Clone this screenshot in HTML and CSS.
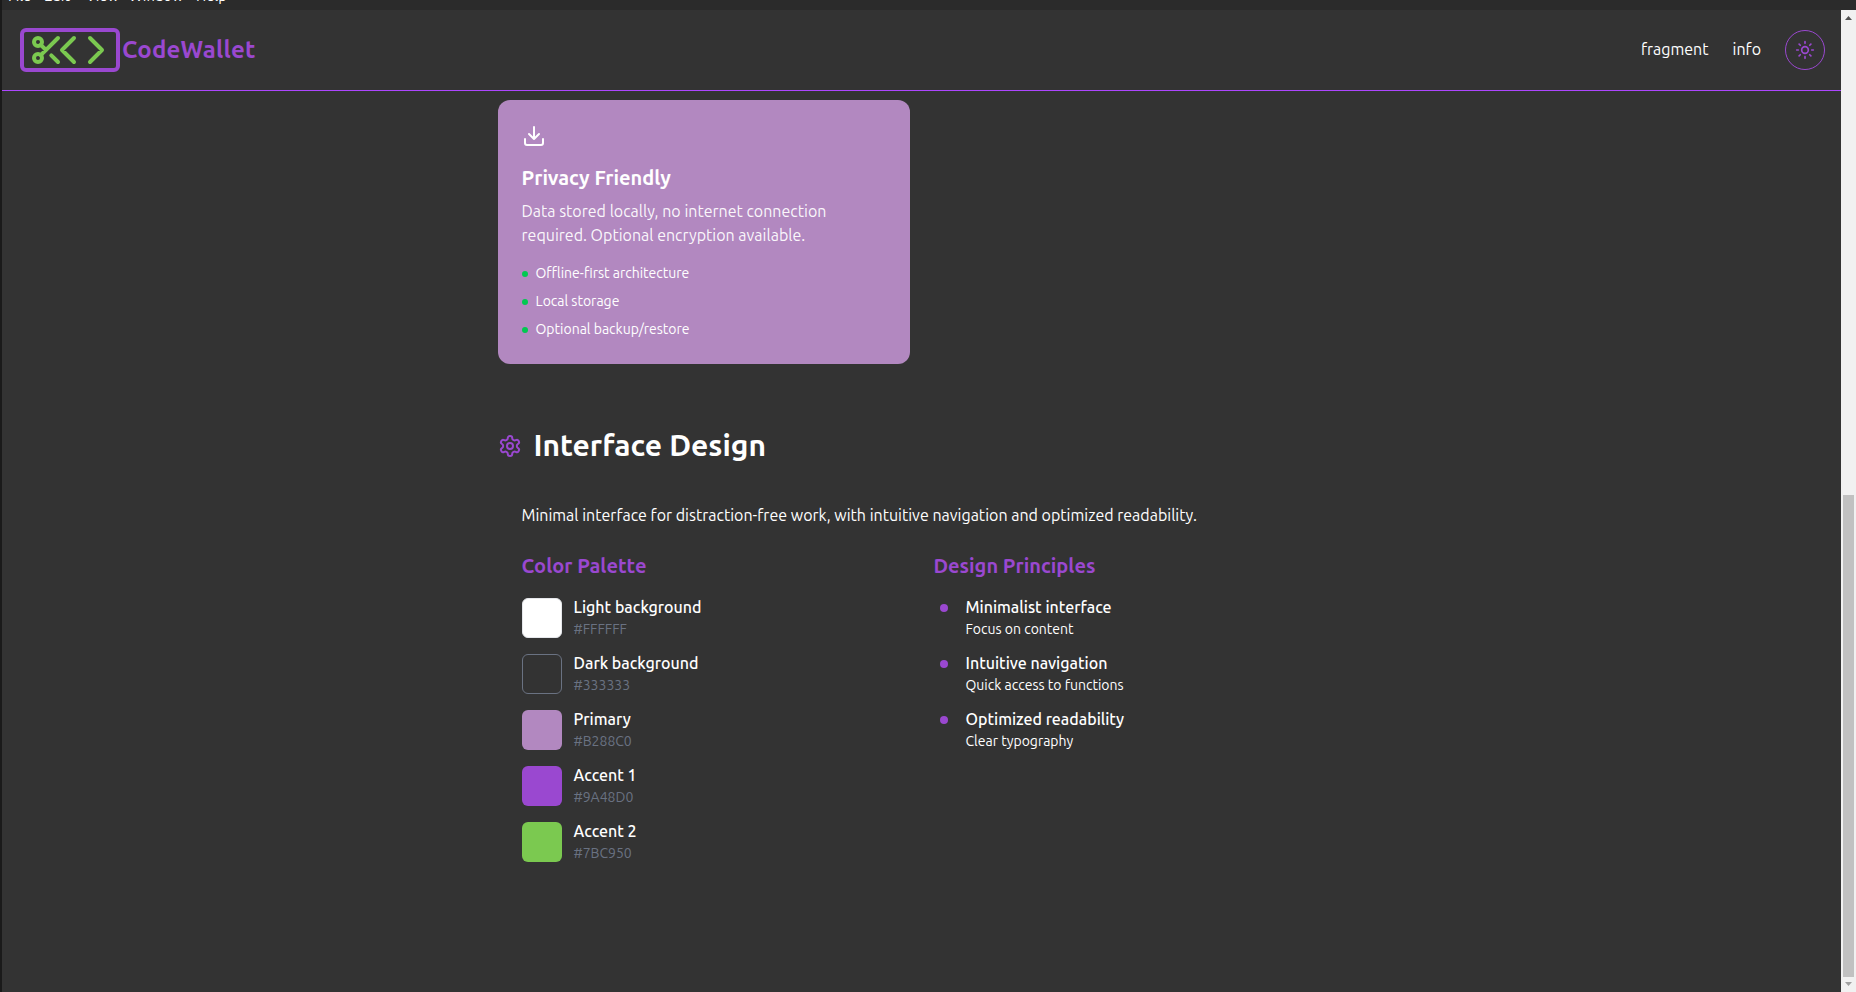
FILE: index.html
```html
<!DOCTYPE html>
<html lang="en">
<head>
<meta charset="utf-8">
<title>CodeWallet</title>
<link rel="stylesheet" href="styles.css">
</head>
<body>
<div class="menubar"><div class="menu-items"><span>File</span><span>Edit</span><span>View</span><span>Window</span><span>Help</span></div></div>
<div class="window">
  <div class="page">
    <header class="header">
      <div class="brand">
        <svg class="logo" viewBox="0 0 100 44" fill="none" stroke-width="4" stroke-linecap="round" stroke-linejoin="round">
          <rect x="2" y="2" width="96" height="40" rx="4" stroke="#9a48d0"/>
          <g stroke="#7bc950"><circle cx="18" cy="14" r="4"/><circle cx="18" cy="30" r="4"/><path d="M38 10 20.800 27.200M20.800 16.800 26 22M31.300 27.300 38 34M54 10 42 22 54 34M70 10 82 22 70 34"/></g>
        </svg>
        <span class="brand-name">CodeWallet</span>
      </div>
      <nav class="nav">
        <a class="nav-link">fragment</a>
        <a class="nav-link">info</a>
        <button class="theme" aria-label="Toggle theme">
          <svg width="20" height="20" viewBox="0 0 24 24" fill="none" stroke="currentColor" stroke-width="2" stroke-linecap="round"><circle cx="12" cy="12" r="4"/><path d="M12 2v2M12 20v2M4.930 4.930l1.410 1.410M17.660 17.660l1.410 1.410M2 12h2M20 12h2M6.340 17.660l-1.410 1.410M19.070 4.930l-1.410 1.410"/></svg>
        </button>
      </nav>
    </header>
    <main class="main">
      <section class="card">
        <svg class="card-icon" width="24" height="24" viewBox="0 0 24 24" fill="none" stroke="currentColor" stroke-width="2" stroke-linecap="round" stroke-linejoin="round"><path d="M21 15v4a2 2 0 0 1-2 2H5a2 2 0 0 1-2-2v-4M7 10l5 5 5-5M12 15V3"/></svg>
        <h3 class="card-title">Privacy Friendly</h3>
        <p class="card-text">Data stored locally, no internet connection<br>required. Optional encryption available.</p>
        <ul class="features">
          <li><span>Offline-first architecture</span></li>
          <li><span>Local storage</span></li>
          <li><span>Optional backup/restore</span></li>
        </ul>
      </section>
      <h2 class="section-title">
        <svg width="24" height="24" viewBox="0 0 24 24" fill="none" stroke="#9a48d0" stroke-width="2" stroke-linecap="round" stroke-linejoin="round"><path d="M12.22 2h-.44a2 2 0 0 0-2 2v.18a2 2 0 0 1-1 1.73l-.43.25a2 2 0 0 1-2 0l-.15-.08a2 2 0 0 0-2.73.73l-.22.38a2 2 0 0 0 .73 2.73l.15.1a2 2 0 0 1 1 1.72v.51a2 2 0 0 1-1 1.74l-.15.09a2 2 0 0 0-.73 2.73l.22.38a2 2 0 0 0 2.73.73l.15-.08a2 2 0 0 1 2 0l.43.25a2 2 0 0 1 1 1.73V20a2 2 0 0 0 2 2h.44a2 2 0 0 0 2-2v-.18a2 2 0 0 1 1-1.73l.43-.25a2 2 0 0 1 2 0l.15.08a2 2 0 0 0 2.73-.73l.22-.39a2 2 0 0 0-.73-2.73l-.15-.08a2 2 0 0 1-1-1.74v-.5a2 2 0 0 1 1-1.74l.15-.09a2 2 0 0 0 .73-2.73l-.22-.38a2 2 0 0 0-2.73-.73l-.15.08a2 2 0 0 1-2 0l-.43-.25a2 2 0 0 1-1-1.73V4a2 2 0 0 0-2-2z"/><circle cx="12" cy="12" r="3"/></svg>
        <span>Interface Design</span>
      </h2>
      <section class="design">
        <p class="intro">Minimal interface for distraction-free work, with intuitive navigation and optimized readability.</p>
        <div class="columns">
          <div>
            <h3 class="column-title">Color Palette</h3>
            <div class="stack">
              <div class="swatch-row"><i class="swatch white"></i><div class="labels"><div class="name">Light background</div><div class="hex">#FFFFFF</div></div></div>
              <div class="swatch-row"><i class="swatch dark"></i><div class="labels"><div class="name">Dark background</div><div class="hex">#333333</div></div></div>
              <div class="swatch-row"><i class="swatch primary"></i><div class="labels"><div class="name">Primary</div><div class="hex">#B288C0</div></div></div>
              <div class="swatch-row"><i class="swatch accent1"></i><div class="labels"><div class="name">Accent 1</div><div class="hex">#9A48D0</div></div></div>
              <div class="swatch-row"><i class="swatch accent2"></i><div class="labels"><div class="name">Accent 2</div><div class="hex">#7BC950</div></div></div>
            </div>
          </div>
          <div>
            <h3 class="column-title">Design Principles</h3>
            <div class="stack">
              <div class="principle"><i class="dot"></i><div class="labels"><div class="name">Minimalist interface</div><div class="sub">Focus on content</div></div></div>
              <div class="principle"><i class="dot"></i><div class="labels"><div class="name">Intuitive navigation</div><div class="sub">Quick access to functions</div></div></div>
              <div class="principle"><i class="dot"></i><div class="labels"><div class="name">Optimized readability</div><div class="sub">Clear typography</div></div></div>
            </div>
          </div>
        </div>
      </section>
    </main>
  </div>
  <div class="scrollbar"><svg width="15" height="17" viewBox="0 0 15 17"><path d="M4 10h7L7.500 6z" fill="#505050"/></svg><div class="track"><div class="thumb"></div></div><svg width="15" height="15" viewBox="0 0 15 15"><path d="M4 5h7L7.500 9z" fill="#a0a0a0"/></svg></div>
</div>
</body>
</html>
```
FILE: styles.css
```css
*{box-sizing:border-box;margin:0;padding:0}
body{height:992px;overflow:hidden;background:#333;border-left:2px solid #1a1a1a;color:#fff;font:16px/24px Ubuntu,"Noto Sans","Open Sans",sans-serif;display:flex;flex-direction:column}
.menubar{height:10px;flex:none;background:#2b2b2b;overflow:hidden;display:flex;align-items:flex-end}
.menu-items{display:grid;grid-template-columns:36px 42px 43px 67px auto;padding-left:6px;font-size:14.67px;line-height:20px;margin-bottom:4px}
.window{flex:1;display:flex;min-height:0}
.page{flex:1}
.header{height:81px;border-bottom:1px solid #ad46ff;padding:0 16px 0 18px;display:flex;justify-content:space-between}
.brand{display:flex;align-items:center;height:80px}
.logo{width:100px;height:44px}
.brand-name{color:#9a48d0;font-size:24px;line-height:32px;font-weight:700;letter-spacing:.2px;margin-left:2px}
.nav{display:flex;align-items:center;gap:24px;height:80px}
.nav-link{padding-bottom:2px}
.theme{width:40px;height:40px;border:1px solid #9a48d0;border-radius:50%;background:none;color:#9a48d0;display:flex;align-items:center;justify-content:center}
.main{width:848px;margin:9px auto 0}
.card{width:412px;height:264px;border-radius:12px;background:#b288c0;padding:24px}
.card-icon{display:block;margin-bottom:16px}
.card-title{font-size:20px;line-height:28px;font-weight:600;margin-bottom:7px}
.card-text{color:#fffffff0;white-space:nowrap;margin-bottom:17px}
.features{list-style:none;display:grid;gap:8px;font-size:14px;line-height:20px}
.features li{display:flex;align-items:center;gap:8px}
.features li span{margin-top:-1px;margin-bottom:1px}
.features li::before{content:"";width:6px;height:6px;border-radius:50%;background:#00c950}
.section-title{display:flex;align-items:center;gap:12px;font-size:30px;line-height:36px;font-weight:600;margin-top:64px}
.section-title span{margin-top:-1px;margin-bottom:1px}
.design{padding:39px 24px 0}
.intro{white-space:nowrap}
.columns{display:grid;grid-template-columns:1fr 1fr;gap:24px;margin-top:25px}
.column-title{color:#9a48d0;font-size:20px;line-height:28px;font-weight:600}
.stack{display:grid;gap:12px;margin-top:16px}
.swatch-row{display:flex;gap:12px;height:44px;align-items:center}
.swatch{width:40px;height:40px;border-radius:6px}
.white{background:#fff;border:1px solid #e5e7eb}
.dark{background:#333;border:1px solid #6a7282}
.primary{background:#b288c0}
.accent1{background:#9a48d0}
.accent2{background:#7bc950}
.labels{margin-top:-1px;margin-bottom:1px}
.name{font-weight:500}
.hex{color:#6a7282;font-size:14px;line-height:20px}
.sub{font-size:14px;line-height:20px}
.principle{display:flex;height:44px;gap:18px;padding-left:6px}
.dot{width:8px;height:8px;border-radius:50%;background:#9a48d0;margin-top:8px}
.scrollbar{width:15px;background:#f1f1f1;display:flex;flex-direction:column}
.track{flex:1;padding:468px 2px 0;display:flex}
.thumb{flex:1;background:#c1c1c1}
```
